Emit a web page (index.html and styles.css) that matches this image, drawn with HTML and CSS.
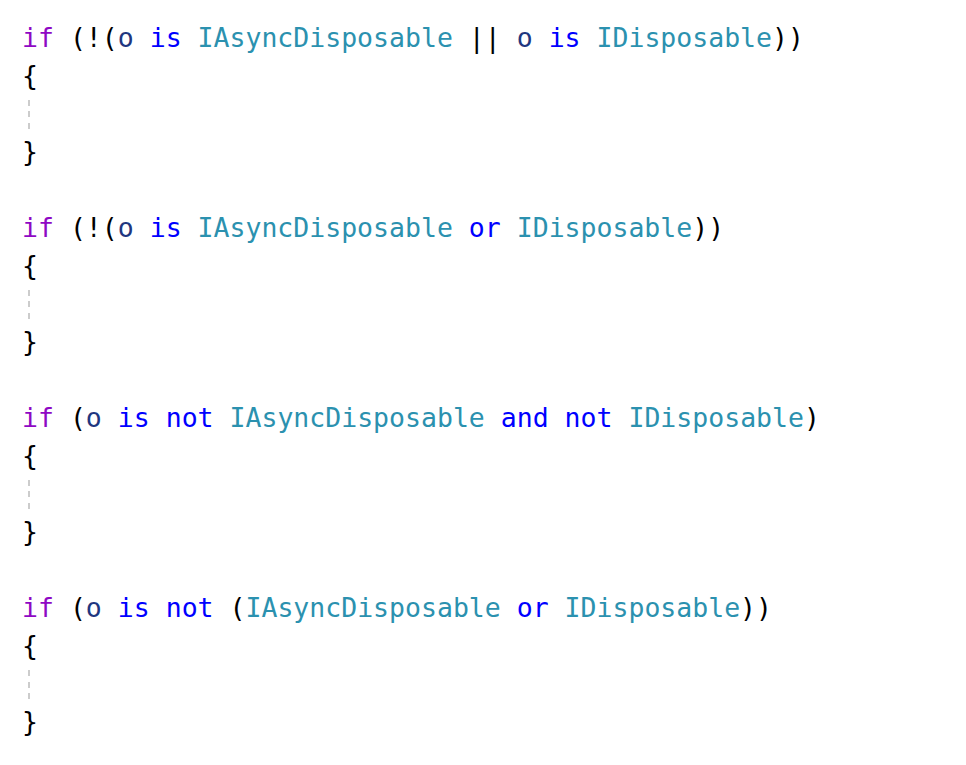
FILE: index.html
```html
<!DOCTYPE html>
<html>
<head>
<meta charset="utf-8">
<link rel="stylesheet" href="styles.css">
</head>
<body>
<pre class="code"><div class="line"><span class="ctl">if</span> (!(<span class="loc">o</span> <span class="kw">is</span> <span class="ty">IAsyncDisposable</span> || <span class="loc">o</span> <span class="kw">is</span> <span class="ty">IDisposable</span>))</div><div class="line">{</div><div class="line guide-line"><span class="guide"></span></div><div class="line">}</div><div class="line"> </div><div class="line"><span class="ctl">if</span> (!(<span class="loc">o</span> <span class="kw">is</span> <span class="ty">IAsyncDisposable</span> <span class="kw">or</span> <span class="ty">IDisposable</span>))</div><div class="line">{</div><div class="line guide-line"><span class="guide"></span></div><div class="line">}</div><div class="line"> </div><div class="line"><span class="ctl">if</span> (<span class="loc">o</span> <span class="kw">is</span> <span class="kw">not</span> <span class="ty">IAsyncDisposable</span> <span class="kw">and</span> <span class="kw">not</span> <span class="ty">IDisposable</span>)</div><div class="line">{</div><div class="line guide-line"><span class="guide"></span></div><div class="line">}</div><div class="line"> </div><div class="line"><span class="ctl">if</span> (<span class="loc">o</span> <span class="kw">is</span> <span class="kw">not</span> (<span class="ty">IAsyncDisposable</span> <span class="kw">or</span> <span class="ty">IDisposable</span>))</div><div class="line">{</div><div class="line guide-line"><span class="guide"></span></div><div class="line">}</div></pre>
</body>
</html>
```
FILE: styles.css
```css
html, body {
  margin: 0;
  padding: 0;
  background: #ffffff;
}
.code {
  margin: 0;
  padding: 19px 0 0 22px;
  font-family: "DejaVu Sans Mono", "Liberation Mono", monospace;
  font-size: 26.5px;
  line-height: 38px;
  color: #000000;
}
.line {
  height: 38px;
  white-space: pre;
  box-sizing: border-box;
}
.guide-line {
  padding-top: 5px;
}
.ctl { color: #8f08c4; }
.kw { color: #0000ff; }
.ty { color: #2b91af; }
.loc { color: #1f377f; }
.guide {
  display: block;
  margin-left: 6px;
  width: 2px;
  height: 30px;
  background: repeating-linear-gradient(to bottom, #cccccc 0 6px, transparent 6px 11.5px);
}
```
